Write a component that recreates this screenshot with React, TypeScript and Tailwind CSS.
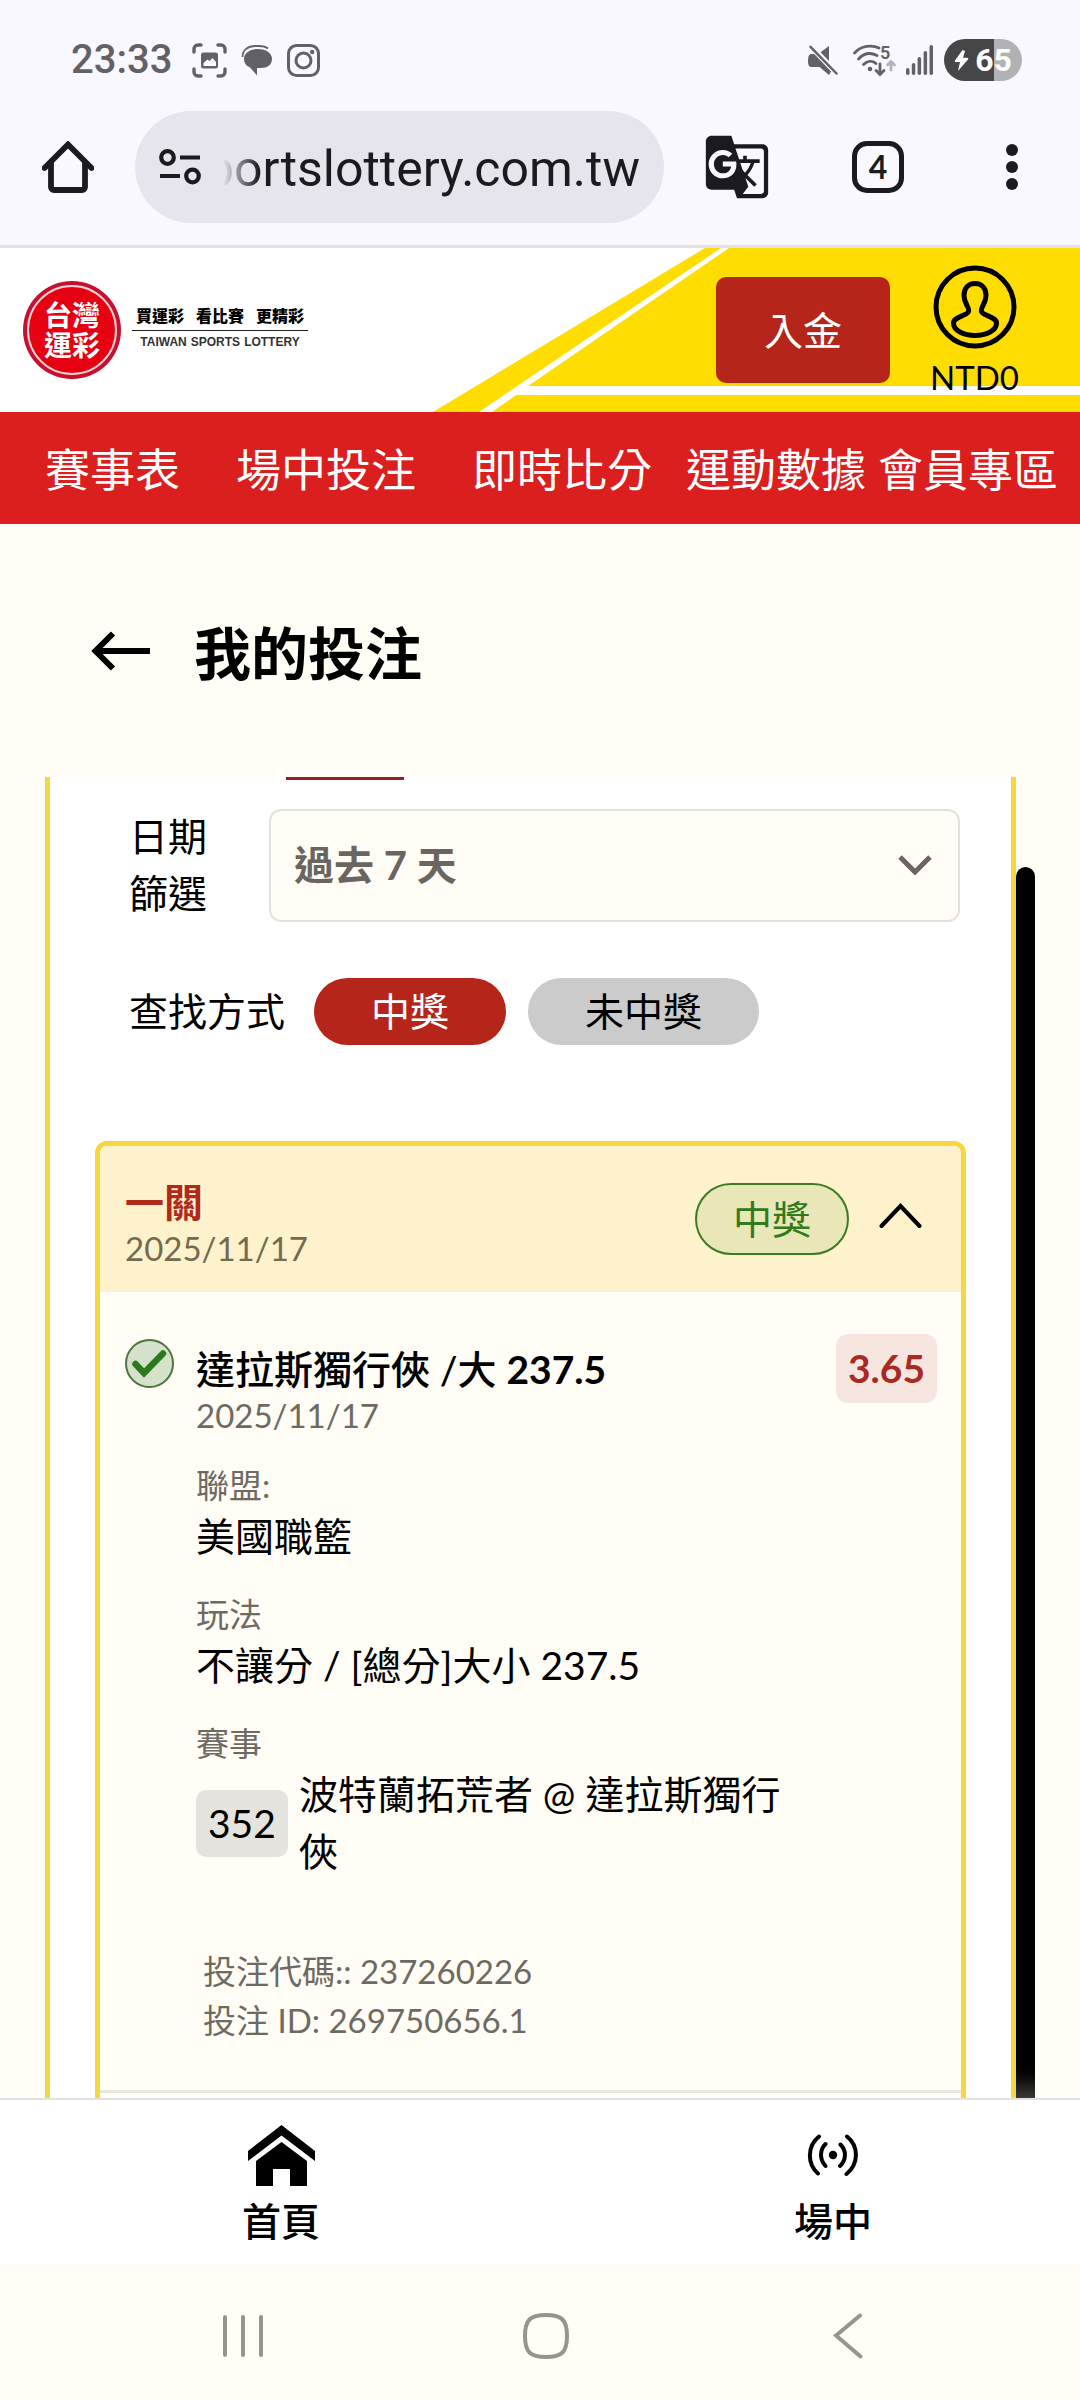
import React, { useState } from 'react';
import { MdGTranslate } from 'react-icons/md';

interface NavItem {
  label: string;
  className: string;
}

interface BetDetail {
  label: string;
  value: string;
}

const NAV_ITEMS: NavItem[] = [
  { label: '賽事表', className: 'mr-14' },
  { label: '場中投注', className: 'mr-14' },
  { label: '即時比分', className: 'mr-[34px]' },
  { label: '運動數據', className: 'mr-3' },
  { label: '會員專區', className: '' },
];

const BET_DETAILS: BetDetail[] = [
  { label: '聯盟:', value: '美國職籃' },
  { label: '玩法', value: '不讓分 / [總分]大小 237.5' },
];

const StatusBar: React.FC = () => (
  <div className="flex items-center justify-between pt-[39px] pl-[71px] pr-[58px] text-[#626266]">
    <div className="flex h-[42px] items-center">
      <span className="font-[family-name:Roboto,sans-serif] text-[40px] leading-[42px] font-medium">23:33</span>
      <svg className="ml-5" width="35" height="35" viewBox="0 0 35 35" fill="none" stroke="currentColor" strokeWidth="3.4" strokeLinecap="round">
        <path d="M2 9V6a4 4 0 0 1 4-4h3M26 2h3a4 4 0 0 1 4 4v3M33 26v3a4 4 0 0 1-4 4h-3M9 33H6a4 4 0 0 1-4-4v-3" />
        <rect x="9" y="9.500" width="17" height="16" rx="2.500" fill="currentColor" stroke="none" />
        <path d="M11.500 23v-3l4-3.500 2 1.500 3-3 3.500 4V23z" fill="#f9f8fe" stroke="none" />
      </svg>
      <svg className="ml-3.5" width="32" height="31" viewBox="0 0 32 31" fill="currentColor">
        <path d="M17 4C25 4 31 8 31 14s-5 9-11 9h-4v7.500L9 22.500C5 21 3 18 3 14 3 8 9 4 17 4z" />
        <path d="M1.500 12C1.500 5 7 1 14 1h4c4 0 7 1 9 2.500" fill="none" stroke="currentColor" strokeWidth="1.800" />
      </svg>
      <svg className="ml-3.5" width="33" height="33" viewBox="0 0 33 33" fill="none" stroke="currentColor" strokeWidth="3">
        <rect x="1.500" y="1.500" width="30" height="30" rx="8" />
        <circle cx="16.500" cy="16.500" r="7.500" />
        <circle cx="25.200" cy="8" r="2.200" fill="currentColor" stroke="none" />
      </svg>
    </div>
    <div className="flex h-[42px] items-center">
      <svg width="30" height="30" viewBox="0 0 30 30" fill="currentColor">
        <path d="M21 1v15l-8.500-8.800z" />
        <path d="M3 9h5L24 25l-3 5-9.500-8H4c-3 0-4-2-4-6s1-7 3-7z" />
        <path d="M3 2l25 26" stroke="#f9f8fe" strokeWidth="5" />
        <path d="M2.500 1.800l26 26.700" stroke="currentColor" strokeWidth="2.500" strokeLinecap="round" />
      </svg>
      <svg className="ml-[15px] overflow-visible" width="44" height="32" viewBox="0 0 44 32" fill="none" stroke="currentColor" strokeWidth="2.800" strokeLinecap="round">
        <path d="M1.500 9C8 1.500 19 .500 26 4M5.500 15C11 9 18 8.500 24 11.500M10.500 20.500c4-4 9-4 12.500-1" />
        <circle cx="17" cy="25" r="2.300" fill="currentColor" stroke="none" />
        <path d="M27 20v9M23 26.500l4 4 4-4" />
        <path d="M38 26v-8M34.500 21l3.500-3.500 3.500 3.500" stroke="#b4b4b8" />
        <text x="27" y="15" fill="currentColor" stroke="none" fontFamily="Roboto, sans-serif" fontSize="18" fontWeight="600">5</text>
      </svg>
      <svg className="ml-[9px]" width="28" height="30" viewBox="0 0 28 30" fill="currentColor">
        <rect x="0" y="23" width="3.500" height="7" rx="1.700" />
        <rect x="5.800" y="18" width="3.500" height="12" rx="1.700" />
        <rect x="11.600" y="12" width="3.500" height="18" rx="1.700" />
        <rect x="17.600" y="6" width="3.500" height="24" rx="1.700" />
        <rect x="23.500" y="0" width="3.500" height="30" rx="1.700" />
      </svg>
      <div className="ml-[10px] flex h-[42px] w-[78px] items-center justify-center gap-1.5 rounded-full bg-linear-to-r from-[#464648] from-64% to-[#b2b2b6] to-64%">
        <svg width="15" height="21" viewBox="0 0 15 21" fill="#fff">
          <path d="M8.500 0L1 10.500C.500 11.500 1 12 2 12h4L4 21l10-11.500c.700-1 .200-1.800-.800-1.800H9L11 1z" />
        </svg>
        <span className="font-[family-name:Roboto,sans-serif] text-[32px] leading-[42px] font-bold text-white">65</span>
      </div>
    </div>
  </div>
);

const BrowserBar: React.FC = () => (
  <div className="mt-[30px] flex items-center border-b-[3px] border-[#e2e2e6] pb-[22px] pl-[42px] pr-14 text-[#1b1b1f]">
    <button aria-label="首頁" className="shrink-0">
      <svg width="52" height="52" viewBox="0 0 52 52" fill="none" stroke="currentColor" strokeWidth="5.800">
        <path d="M2.500 27L26 3.500 49.500 27" strokeLinecap="round" />
        <path d="M9 21v25a3 3 0 0 0 3 3h28a3 3 0 0 0 3-3V21" />
      </svg>
    </button>
    <div className="ml-[41px] flex h-28 min-w-0 flex-1 items-center rounded-full bg-[#e6e5ed] pl-6 pr-6">
      <svg className="shrink-0" width="42" height="36" viewBox="0 0 42 36" fill="none" stroke="currentColor" strokeWidth="4.200">
        <circle cx="8.500" cy="8.500" r="6.300" />
        <path d="M21 8.500h20M1 27h20" />
        <circle cx="33.500" cy="27" r="6.300" />
      </svg>
      <input
        type="text"
        aria-label="網址"
        defaultValue="portslottery.com.tw"
        className="w-full min-w-0 bg-transparent pt-1 text-right font-[family-name:Roboto,sans-serif] text-[50px] leading-[60px] outline-none [mask-image:linear-gradient(to_right,transparent_22px,black_58px)]"
      />
    </div>
    <button aria-label="翻譯" className="ml-[39px] shrink-0">
      <MdGTranslate size={68} />
    </button>
    <button aria-label="分頁" className="ml-[81px] flex size-[52px] shrink-0 items-center justify-center rounded-[15px] border-[5px] border-current text-[32px] font-bold">
      4
    </button>
    <button aria-label="選單" className="ml-[96px] shrink-0">
      <svg width="24" height="48" viewBox="0 0 24 48" fill="currentColor">
        <circle cx="12" cy="7" r="6" />
        <circle cx="12" cy="24" r="6" />
        <circle cx="12" cy="41" r="6" />
      </svg>
    </button>
  </div>
);

const Logo: React.FC = () => (
  <a href="#home" className="relative flex items-center gap-[11px]">
    <div className="size-[98px] rounded-full bg-[#c8102e] p-1">
      <div className="flex size-full items-center justify-center rounded-full border-2 border-[#fbd5d5] bg-[#e60012] text-[28px] leading-[30px] font-bold text-white">
        <p>台灣<br />運彩</p>
      </div>
    </div>
    <div className="flex flex-col items-center pb-1.5 text-black">
      <div className="flex gap-3 border-b border-[#222] px-1 pb-0.5 text-[16px] leading-6 font-black">
        <span>買運彩</span>
        <span>看比賽</span>
        <span>更精彩</span>
      </div>
      <div className="flex gap-1 pt-[3px] font-[family-name:'Liberation_Sans',sans-serif] text-[12px] leading-4 font-bold text-[#333]">
        <span>TAIWAN</span>
        <span>SPORTS</span>
        <span>LOTTERY</span>
      </div>
    </div>
  </a>
);

const SiteHeader: React.FC = () => (
  <header>
    <div className="relative flex h-[164px] items-center justify-between bg-white pl-[23px] pr-[61px]">
      <svg className="absolute top-0 right-0" width="647" height="164" viewBox="0 0 647 164">
        <path d="M0 164L272 0h375v164z" fill="#ffdd00" />
        <path d="M46 164L288 0h8L95 138h552v9H83l-24 17z" fill="#fff" />
      </svg>
      <Logo />
      <div className="relative flex items-center gap-10">
        <button className="rounded-[10px] bg-[#b52519] px-12 py-6 text-[39px] leading-[58px] text-white">入金</button>
        <a href="#account" className="flex flex-col items-center gap-3 pb-0.5 text-black">
          <svg width="84" height="84" viewBox="0 0 84 84" fill="none" stroke="currentColor" strokeWidth="5">
            <circle cx="42" cy="42" r="39" />
            <path d="M42 18.500c-8 0-11 6-11 12 0 5 2 8 3.500 11 2 4 1.500 6-1.500 7.500-6 3-13 4.500-12.500 9.500C21 66 31 70.500 42 70.500S63 66 63.500 58.500C64 53.500 57 52 51 49c-3-1.500-3.500-3.500-1.500-7.500 1.500-3 3.500-6 3.500-11 0-6-3-12-11-12z" strokeLinejoin="round" />
          </svg>
          <span className="text-[33px] leading-8">NTD0</span>
        </a>
      </div>
    </div>
    <nav className="flex overflow-hidden bg-[#db1e1e] pt-[30px] pb-[25px] pl-[45px] text-[45px] leading-[57px] whitespace-nowrap text-white">
      {NAV_ITEMS.map((item) => (
        <a key={item.label} href="#nav" className={item.className}>{item.label}</a>
      ))}
    </nav>
  </header>
);

const Filters: React.FC = () => {
  const [won, setWon] = useState(true);
  const active = 'bg-[#b52519] text-white';
  const idle = 'bg-[#cbcbcb] text-black';

  return (
    <div className="pt-7 pr-[51px] pl-[79px] text-[39px]">
      <div className="flex items-center gap-[60px]">
        <label htmlFor="range" className="w-20 shrink-0 leading-[57px]">日期篩選</label>
        <div className="relative flex-1">
          <select
            id="range"
            className="w-full appearance-none rounded-xl border-2 border-[#e3e2dc] bg-[#fffdf5] py-[26px] pl-[23px] text-[40px] leading-[57px] font-bold text-[#6a665f]"
          >
            <option>過去 7 天</option>
          </select>
          <svg className="pointer-events-none absolute top-1/2 right-7 -translate-y-1/2" width="34" height="20" viewBox="0 0 34 20" fill="none" stroke="#6a665f" strokeWidth="5">
            <path d="M2 2l15 15L32 2" />
          </svg>
        </div>
      </div>
      <div className="mt-14 flex items-center">
        <span>查找方式</span>
        <button onClick={() => setWon(true)} className={`ml-[29px] rounded-full px-[57px] py-[5px] leading-[57px] ${won ? active : idle}`}>中獎</button>
        <button onClick={() => setWon(false)} className={`ml-[22px] rounded-full px-[57px] py-[5px] leading-[57px] ${won ? idle : active}`}>未中獎</button>
      </div>
    </div>
  );
};

const BetCard: React.FC = () => (
  <article className="mx-[45px] mt-24 flex-1 rounded-t-xl border-x-[5px] border-t-[5px] border-[#f5d840] bg-[#fffdf5]">
    <div className="flex items-center justify-between rounded-t-[7px] bg-[#fef2cc] pt-[21px] pr-[39px] pb-[21px] pl-[25px]">
      <div className="pt-3 leading-[46px]">
        <h2 className="text-[39px] font-bold text-[#b02a1c]">一關</h2>
        <p className="text-[33px] text-[#75694f]">2025/11/17</p>
      </div>
      <div className="flex items-center gap-[30px]">
        <span className="rounded-full border-2 border-[#3d7a26] bg-[#e9e6b7] px-9 py-[6px] text-[39px] leading-[56px] text-[#2f7a1c]">中獎</span>
        <button aria-label="收合" className="pb-1.5">
          <svg width="43" height="26" viewBox="0 0 43 26" fill="none" stroke="#000" strokeWidth="4" strokeLinecap="round">
            <path d="M2.500 23L21.500 3l19 20" />
          </svg>
        </button>
      </div>
    </div>

    <div className="flex items-start border-b-[3px] border-[#e9e6db] pt-[42px] pr-6 pb-[45px] pl-[25px]">
      <svg className="mt-[5px] shrink-0" width="49" height="49" viewBox="0 0 49 49">
        <circle cx="24.500" cy="24.500" r="23.500" fill="#d6e1cb" stroke="#4c7440" strokeWidth="2" />
        <path d="M10.500 25l8.500 9L38 14.500" fill="none" stroke="#2c7a1c" strokeWidth="6.500" strokeLinecap="round" />
      </svg>
      <div className="ml-[22px] min-w-0 flex-1 pt-3">
        <h3 className="text-[39px] leading-[46px] font-medium">
          達拉斯獨行俠 /大 <span className="font-bold">237.5</span>
        </h3>
        <p className="text-[33px] leading-[46px] text-[#6e6a62]">2025/11/17</p>
        <dl className="mt-6 flex flex-col gap-[26px] text-[39px] leading-[57px]">
          {BET_DETAILS.map((d) => (
            <div key={d.label}>
              <dt className="text-[33px] leading-[46px] text-[#6e6a62]">{d.label}</dt>
              <dd>{d.value}</dd>
            </div>
          ))}
          <div>
            <dt className="text-[33px] leading-[46px] text-[#6e6a62]">賽事</dt>
            <dd className="flex items-center gap-[11px]">
              <span className="rounded-[10px] bg-[#e5e3dd] px-3 py-[5px]">352</span>
              <span>波特蘭拓荒者 @ 達拉斯獨行俠</span>
            </dd>
          </div>
        </dl>
        <div className="mt-[67px] pl-[7px] text-[33px] leading-[49px] text-[#6e6a62]">
          <p>投注代碼:: 237260226</p>
          <p>投注 ID: 269750656.1</p>
        </div>
      </div>
      <span className="ml-6 shrink-0 rounded-xl bg-[#f6e6df] px-3 py-[6px] text-[39px] leading-[57px] font-bold text-[#a92a20]">3.65</span>
    </div>
  </article>
);

const BottomNav: React.FC = () => (
  <nav className="flex justify-between border-t-2 border-[#e2e2e2] bg-white pt-6 pr-[208px] pb-5 pl-[242px] text-[39px] leading-[46px] font-medium text-black">
    <a href="#home" className="flex flex-col items-center gap-3">
      <span className="flex h-[62px] items-center">
        <svg width="67" height="61" viewBox="0 0 67 61" fill="currentColor">
          <path d="M33.500 0L67 26v10L33.500 10.500 0 36V26z" />
          <path d="M33.500 17L59 36v25H42V44H25v17H8V36z" />
        </svg>
      </span>
      首頁
    </a>
    <a href="#live" className="flex flex-col items-center gap-3">
      <span className="flex h-[62px] items-center">
        <svg width="52" height="42" viewBox="0 0 52 42" fill="none" stroke="currentColor" strokeWidth="4" strokeLinecap="round">
          <path d="M12 2.500C0 12 0 30 11 39.500M40 2.500c12 9.500 12 27.500-.500 37.500M18.500 10c-6 6-6 15.500 0 22M33.500 10.500c6 6 6 15.500-.500 21.500" />
          <circle cx="26" cy="21" r="4.200" fill="currentColor" stroke="none" />
        </svg>
      </span>
      場中
    </a>
  </nav>
);

const SystemNav: React.FC = () => (
  <div className="flex justify-between bg-[#fffdf5] pt-[49px] pr-[192px] pb-[41px] pl-[203px] text-[#96948d]">
    <button aria-label="最近" className="flex w-20 justify-center">
      <svg width="46" height="46" viewBox="0 0 46 46" stroke="currentColor" strokeWidth="4" strokeLinecap="round">
        <path d="M5 4v38M23 4v38M41 4v38" />
      </svg>
    </button>
    <button aria-label="主畫面" className="flex w-20 justify-center">
      <svg width="46" height="46" viewBox="0 0 46 46" fill="none" stroke="currentColor" strokeWidth="4">
        <path d="M23 2c16 0 21 5 21 21s-5 21-21 21S2 39 2 23 7 2 23 2z" />
      </svg>
    </button>
    <button aria-label="返回" className="flex w-20 justify-center">
      <svg width="30" height="46" viewBox="0 0 30 46" fill="none" stroke="currentColor" strokeWidth="4" strokeLinecap="round">
        <path d="M27 2.500L3 22.500l24.500 21" />
      </svg>
    </button>
  </div>
);

const App: React.FC = () => {
  return (
    <div className="flex min-h-screen flex-col bg-[#fffdf5] font-[family-name:Lato,'Noto_Sans_CJK_TC',sans-serif] text-black" lang="zh-Hant">
      <div className="bg-[#f9f8fe]">
        <StatusBar />
        <BrowserBar />
      </div>

      <SiteHeader />

      {/* Page title */}
      <div className="flex items-center gap-11 pt-[94px] pb-[89px] pl-[91px]">
        <button aria-label="返回" className="pb-1">
          <svg width="59" height="40" viewBox="0 0 59 40" fill="none" stroke="currentColor" strokeWidth="6">
            <path d="M59 20H5M22 2.500L4.500 20 22 37.500" />
          </svg>
        </button>
        <h1 className="text-[57px] leading-[70px] font-bold">我的投注</h1>
      </div>

      {/* Bets panel with its scrollbar */}
      <main className="flex flex-1 pr-[45px] pl-[45px]">
        <section className="flex min-w-0 flex-1 flex-col border-x-[5px] border-[#f5d840] bg-white">
          <div className="ml-[236px] h-[3px] w-[118px] bg-[#9b1c2c]" />
          <Filters />
          <BetCard />
        </section>
        <div className="mt-[90px] w-[19px] rounded-t-full bg-linear-to-b from-black from-97% to-[#383838]" />
      </main>

      <BottomNav />
      <SystemNav />
    </div>
  );
};

export default App;
